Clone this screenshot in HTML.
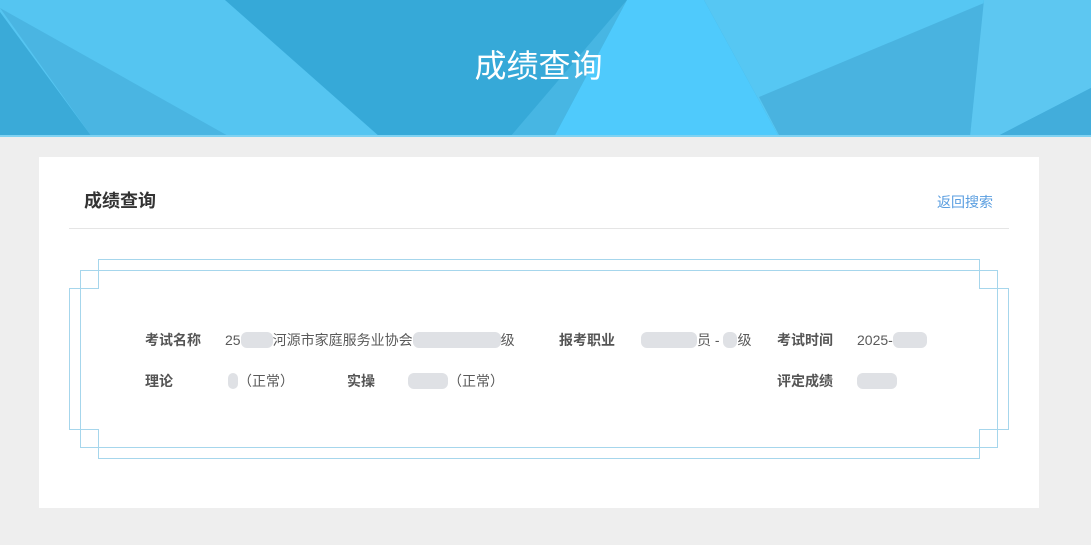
<!DOCTYPE html>
<html><head><meta charset="utf-8"><style>
*{margin:0;padding:0;box-sizing:border-box}
body{width:1091px;height:545px;background:#eeeeee;font-family:"Liberation Sans","Noto Sans CJK SC",sans-serif;position:relative;overflow:hidden}
.banner{position:absolute;left:0;top:0;width:1091px;height:137px}
.title{position:absolute;left:0;width:1077px;top:44px;text-align:center;color:#fff;font-size:32px;line-height:44px}
.card{position:absolute;left:39px;top:157px;width:1000px;height:351px;background:#fff}
.h{position:absolute;left:45px;top:32px;font-size:18px;font-weight:bold;color:#333;line-height:24px}
.back{position:absolute;left:898px;top:35px;font-size:14px;color:#5a9ee0;line-height:20px}
.hr{position:absolute;left:30px;top:71px;width:940px;height:1px;background:#e5e5e5}
.t{position:absolute;font-size:14px;line-height:20px;color:#5a5a5a;white-space:nowrap}
.b{font-weight:bold;color:#555}
.blur{display:inline-block;background:#dfe1e5;border-radius:6px;height:16px;vertical-align:-3px}
</style></head><body>
<svg class="banner" viewBox="0 0 1091 137" width="1091" height="137">
<rect width="1091" height="137" fill="#36a9d8"/>
<polygon points="0,0 225,0 380,137 0,137" fill="#55c5f1"/>
<polygon points="0,8 230,137 92,137" fill="#4ab5e2"/>
<polygon points="0,12 92,137 0,137" fill="#3aaad8"/>
<polygon points="627,0 554,137 510,137" fill="#47b6e3"/>
<polygon points="627,0 704,0 779,137 554,137" fill="#4fcafc"/>
<polygon points="704,0 984,0 970,137 779,137" fill="#56c7f3"/>
<polygon points="984,3 759,97 780,137 970,137" fill="#49b3e0"/>
<polygon points="984,0 1091,0 1091,88 996,137 970,137" fill="#5dc7f1"/>
<polygon points="1091,88 996,137 1091,137" fill="#42addb"/>
<rect y="135" width="1091" height="2" fill="#7fd2f2"/>
</svg>
<div class="title">成绩查询</div>
<div class="card">
<div class="h">成绩查询</div>
<div class="back">返回搜索</div>
<div class="hr"></div>
</div>
<svg style="position:absolute;left:0;top:0" width="1091" height="545">
<g fill="none" stroke="#a6d6ec" stroke-width="1">
<rect x="80.5" y="270.5" width="917" height="177"/>
<polygon points="98.5,259.5 979.5,259.5 979.5,288.5 1008.5,288.5 1008.5,429.5 979.5,429.5 979.5,458.5 98.5,458.5 98.5,429.5 69.5,429.5 69.5,288.5 98.5,288.5"/>
</g>
</svg>
<div class="t b" style="left:145px;top:330px">考试名称</div>
<div class="t" style="left:225px;top:330px">25<span class="blur" style="width:32px"></span>河源市家庭服务业协会<span class="blur" style="width:88px"></span>级</div>
<div class="t b" style="left:559px;top:330px">报考职业</div>
<div class="t" style="left:641px;top:330px"><span class="blur" style="width:56px"></span>员 - <span class="blur" style="width:14px"></span>级</div>
<div class="t b" style="left:777px;top:330px">考试时间</div>
<div class="t" style="left:857px;top:330px">2025-<span class="blur" style="width:34px"></span></div>
<div class="t b" style="left:145px;top:371px">理论</div>
<div class="t" style="left:228px;top:371px"><span class="blur" style="width:10px"></span>（正常）</div>
<div class="t b" style="left:347px;top:371px">实操</div>
<div class="t" style="left:408px;top:371px"><span class="blur" style="width:40px"></span>（正常）</div>
<div class="t b" style="left:777px;top:371px">评定成绩</div>
<div class="t" style="left:857px;top:371px"><span class="blur" style="width:40px"></span></div>
</body></html>
